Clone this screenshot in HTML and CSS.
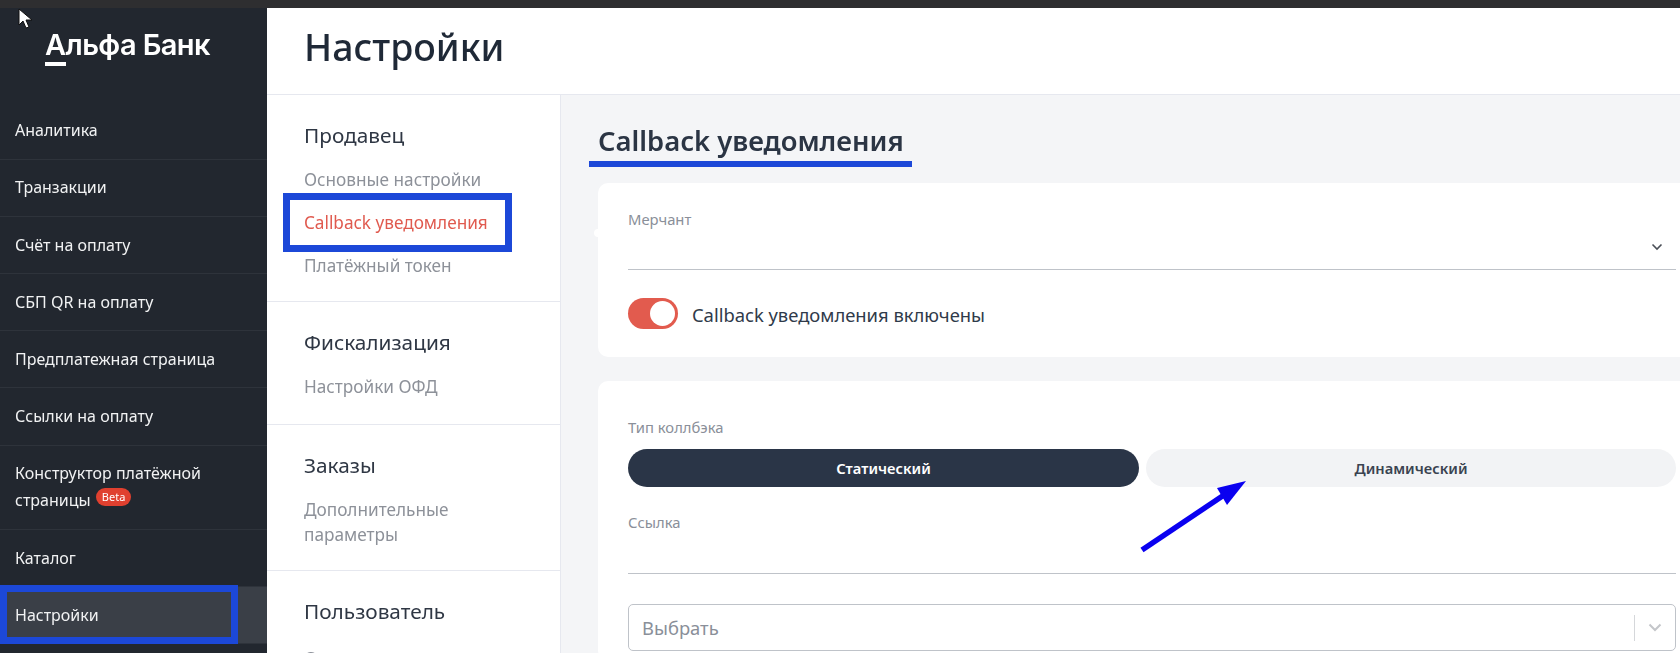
FILE: index.html

```html
<!DOCTYPE html>
<html lang="ru">
<head>
  <meta charset="UTF-8" />
  <meta name="viewport" content="width=device-width, initial-scale=1.0"/>
  <title>Настройки - Callback уведомления</title>
  <link rel="stylesheet" href="styles.css">
</head>
<body>
  <div class="topstrip"></div>
  <div class="shell">
    <aside class="sidebar">
      <div class="logo"><span class="logo-a">А</span>льфа Банк</div>
      <nav class="menu">
        <a href="#">Аналитика</a>
        <a href="#">Транзакции</a>
        <a href="#">Счёт на оплату</a>
        <a href="#">СБП QR на оплату</a>
        <a href="#">Предплатежная страница</a>
        <a href="#">Ссылки на оплату</a>
        <a href="#">Конструктор платёжной страницы <span class="beta">Beta</span></a>
        <a href="#">Каталог</a>
        <a href="#" class="active">Настройки</a>
      </nav>
    </aside>
    <div class="content">
      <header class="header"><h1>Настройки</h1></header>
      <div class="columns">
        <nav class="subnav">
          <section>
            <h3>Продавец</h3>
            <a href="#">Основные настройки</a>
            <a href="#" class="current">Callback уведомления</a>
            <a href="#">Платёжный токен</a>
          </section>
          <section>
            <h3>Фискализация</h3>
            <a href="#">Настройки ОФД</a>
          </section>
          <section>
            <h3>Заказы</h3>
            <a href="#">Дополнительные<br>параметры</a>
          </section>
          <section>
            <h3>Пользователь</h3>
            <a href="#">Смена пароля</a>
          </section>
        </nav>
        <main class="main">
          <h2>Callback уведомления</h2>
          <div class="card card-first">
            <div class="label">Мерчант</div>
            <div class="field field-merchant">
              <svg class="chev" width="12" height="8" viewBox="0 0 12 8"><path d="M1.5 1.5 6 6l4.5-4.5" fill="none" stroke="#4a4f57" stroke-width="1.6"/></svg>
            </div>
            <div class="toggle-row">
              <span class="toggle"><span class="knob"></span></span>
              <span class="toggle-text">Callback уведомления включены</span>
            </div>
          </div>
          <div class="card card-second">
            <div class="label">Тип коллбэка</div>
            <div class="switch">
              <button class="on">Статический</button>
              <button>Динамический</button>
            </div>
            <div class="label label-link">Ссылка</div>
            <div class="field field-link"></div>
            <div class="select">
              <span>Выбрать</span>
              <span class="select-end">
                <svg width="14" height="9" viewBox="0 0 14 9"><path d="M1.5 1.5 7 7l5.5-5.5" fill="none" stroke="#c4c6ca" stroke-width="2"/></svg>
              </span>
            </div>
          </div>
        </main>
      </div>
    </div>
  </div>

  <!-- пометки поверх скриншота -->
  <div class="mark mark-menu"></div>
  <div class="mark mark-link"></div>
  <div class="mark-line"></div>
  <svg class="arrow" width="120" height="84" viewBox="0 0 120 84">
    <path d="M7 75 92 18" stroke="#0a00f0" stroke-width="5.5" fill="none"/>
    <path d="M111 6 82 13 92 30Z" fill="#0a00f0"/>
  </svg>
  <svg class="cursor" width="16" height="22" viewBox="0 0 16 22">
    <path d="M1 1v16l4-4 3 7 3-1-3-7h6Z" fill="#fff" stroke="#111" stroke-width="1"/>
  </svg>
</body>
</html>
```

FILE: styles.css

```css
*{box-sizing:border-box;}
html,body{margin:0;height:100%;overflow:hidden;}
body{font-family:"Noto Sans",sans-serif;background:#fff;color:#2b3544;position:relative;}
.topstrip{height:8px;background:#2e2e30;}
.shell{display:flex;height:645px;filter:blur(.45px);}

/* Sidebar */
.sidebar{width:267px;flex:none;background:#22272f;color:#f1f2f3;}
.logo{height:94.4px;padding:18px 0 0 45px;font-family:"Inter",sans-serif;font-size:29px;line-height:38px;font-weight:600;letter-spacing:-.6px;color:#fff;white-space:nowrap;}
.logo-a{display:inline-block;position:relative;}
.logo-a::after{content:"";position:absolute;left:0;right:0;bottom:-2px;height:4px;background:#fff;}
.menu a{display:block;padding:14.8px 15px 14.4px;font-size:16px;line-height:27px;color:#f1f2f3;text-decoration:none;border-bottom:1px solid #2e333b;}
.menu a.active{background:#3a3f47;}
.beta{display:inline-block;vertical-align:5px;margin-left:1px;padding:0 6px;background:#e0402f;color:#fff;font-size:11px;line-height:18px;border-radius:9px;}

/* Header */
.content{flex:1;min-width:0;display:flex;flex-direction:column;}
.header{height:87px;flex:none;padding-left:37px;border-bottom:1px solid #e6e8ef;}
h1{margin:0;font-size:37.5px;line-height:78px;font-weight:500;color:#1f2937;}
.columns{flex:1;display:flex;min-height:0;}

/* Sub navigation */
.subnav{width:294px;flex:none;border-right:1px solid #e6e8ef;overflow:hidden;}
.subnav section{padding:26px 20px 22.6px 37px;border-bottom:1px solid #e6e8ef;}
.subnav section:nth-child(2){padding-bottom:25.6px;}
.subnav section:last-child{border-bottom:none;}
.subnav section:last-child h3{margin-bottom:21px;}
.subnav h3{margin:0 0 18px;font-size:20.8px;line-height:28px;font-weight:400;color:#2f3744;}
.subnav a{display:block;margin-top:18px;font-size:17.2px;line-height:25px;color:#8d9199;text-decoration:none;}
.subnav h3+a{margin-top:0;}
.subnav a.current{color:#e05a4f;}

/* Main column */
.main{flex:1;min-width:0;background:#f4f5f7;padding:30px 0 0 37px;overflow:hidden;}
h2{margin:0 0 26px;font-size:27.4px;line-height:32px;font-weight:600;color:#2b3544;}
.card{position:relative;background:#fff;border-radius:10px 0 0 10px;padding-left:30px;padding-right:4px;}
.card-first{padding-top:27px;margin-bottom:24px;height:174px;}
.card-first::before{content:"";position:absolute;left:-4px;top:46px;width:8px;height:8px;border-radius:50%;background:#fff;}
.card-second{padding-top:37px;height:280px;}
.label{font-size:14.8px;line-height:18px;color:#8a8f99;}
.field{position:relative;border-bottom:1px solid #bfc3c9;}
.field-merchant{height:42px;}
.field-link{height:43px;}
.chev{position:absolute;right:13px;top:15px;}
.toggle-row{display:flex;align-items:center;gap:14px;margin-top:28px;font-size:18.4px;color:#2f3a4a;}
.toggle{display:block;width:50px;height:31px;padding:3px;border-radius:16px;background:#e25b4e;}
.knob{display:block;width:25px;height:25px;margin-left:19px;border-radius:50%;background:#fff;}
.toggle-text{padding-top:2px;}
.switch{display:flex;gap:7px;margin-top:13px;}
.switch button{height:38px;border:none;border-radius:19px;background:#f2f3f5;color:#3a4350;font-family:inherit;font-size:14.7px;font-weight:600;padding:0;}
.switch button:first-child{width:511px;}
.switch button:last-child{flex:1;}
.switch button.on{background:#2a3547;color:#fff;}
.label-link{margin-top:26px;}
.select{display:flex;justify-content:space-between;align-items:center;height:47px;margin-top:30px;padding-left:13px;border:1px solid #bfc3c9;border-radius:5px;font-size:18.4px;color:#8a8f99;}
.select-end{display:flex;align-items:center;justify-content:center;width:41px;height:26px;border-left:1px solid #d5d7da;}

/* Annotations drawn over the screenshot */
.mark{position:absolute;border:7px solid #1c48d8;}
.mark-menu{left:0;top:585px;width:238px;height:59px;}
.mark-link{left:283px;top:193px;width:229px;height:59px;}
.mark-line{position:absolute;left:589px;top:161px;width:323px;height:6px;background:#1c48d8;}
.arrow{position:absolute;left:1135px;top:475px;}
.cursor{position:absolute;left:18px;top:8px;}
```
